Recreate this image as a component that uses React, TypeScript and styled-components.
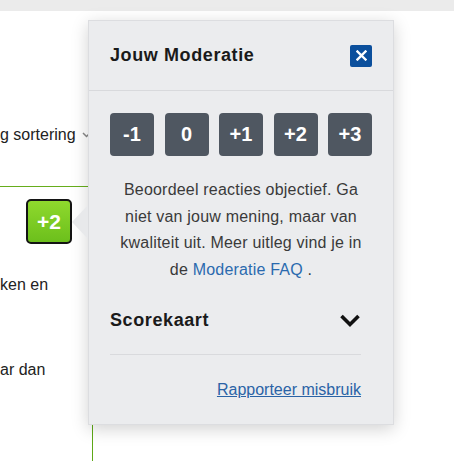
import styled, { createGlobalStyle } from "styled-components";

const GlobalStyle = createGlobalStyle`
  html, body {
    margin: 0;
    padding: 0;
    background: #ffffff;
  }

  body {
    font-family: "Liberation Sans", Arial, sans-serif;
  }
`;

const scores = ["-1", "0", "+1", "+2", "+3"];

export default function App() {
  return (
    <>
      <GlobalStyle />
      <SPage>
        {/* achtergrond: artikel en reacties */}
        <STopBar>
          <STopText>om</STopText>
        </STopBar>

        <SSortRow>
          g sortering
          <svg width="9" height="6" viewBox="0 0 9 6">
            <polyline points="1,1 4.5,4.5 8,1" fill="none" stroke="#888" strokeWidth="1.5" />
          </svg>
        </SSortRow>

        <SGreenRule />

        <SBadgeRow>
          <SBadge>+2</SBadge>
        </SBadgeRow>

        <SCommentLine $gap={30}>ken en</SCommentLine>
        <SCommentLine $gap={63}>ar dan</SCommentLine>

        <SThreadLine />

        {/* popover met moderatie */}
        <SPopover>
          <SHeader>
            <STitle>Jouw Moderatie</STitle>
            <SClose aria-label="Sluiten">
              <svg width="11" height="11" viewBox="0 0 11 11">
                <path d="M1.5 1.5 L9.5 9.5 M9.5 1.5 L1.5 9.5" stroke="#fff" strokeWidth="2.4" strokeLinecap="square" />
              </svg>
            </SClose>
          </SHeader>

          <SBody>
            <SScoreRow>
              {scores.map((s) => (
                <SScoreButton key={s}>{s}</SScoreButton>
              ))}
            </SScoreRow>

            <SHelp>
              Beoordeel reacties objectief. Ga
              <br />
              niet van jouw mening, maar van
              <br />
              kwaliteit uit. Meer uitleg vind je in
              <br />
              de <SLink href="#">Moderatie FAQ</SLink> .
            </SHelp>

            <SLower>
              <SScorecardRow>
                <SScorecardTitle>Scorekaart</SScorecardTitle>
                <svg width="22" height="15" viewBox="0 0 22 15">
                  <polyline points="2.5,3 11,11.5 19.5,3" fill="none" stroke="#111" strokeWidth="3.6" />
                </svg>
              </SScorecardRow>
              <SDivider />
              <SFooter>
                <SReport href="#">Rapporteer misbruik</SReport>
              </SFooter>
            </SLower>
          </SBody>
        </SPopover>
      </SPage>
    </>
  );
}

const SPage = styled.div`
  position: relative;
  width: 454px;
  height: 461px;
  overflow: hidden;
  color: #222222;
`;

const STopBar = styled.div`
  height: 11px;
  background: #ebebeb;
  overflow: hidden;
`;

const STopText = styled.div`
  font-size: 18px;
  line-height: 18px;
  margin-top: -15px;
  color: #222;
`;

const SSortRow = styled.div`
  display: flex;
  align-items: center;
  gap: 6px;
  height: 22px;
  margin-top: 113px;
  font-size: 16px;
  color: #222;
`;

const SGreenRule = styled.div`
  width: 300px;
  height: 1px;
  margin-top: 40px;
  background: #66ad1c;
`;

const SBadgeRow = styled.div`
  display: flex;
  padding-left: 26px;
  margin-top: 12px;
`;

const SBadge = styled.div`
  width: 46px;
  height: 45px;
  box-sizing: border-box;
  display: flex;
  align-items: center;
  justify-content: center;
  border: 2px solid #141414;
  border-radius: 5px;
  background: linear-gradient(#8fd92d, #6cbf1c);
  color: #ffffff;
  font-size: 21px;
  font-weight: bold;
`;

const SCommentLine = styled.div<{ $gap: number }>`
  margin-top: ${(p) => p.$gap}px;
  font-size: 16px;
  line-height: 22px;
  color: #222;
`;

const SThreadLine = styled.div`
  margin-left: 92px;
  margin-top: 10px;
  height: 90px;
  border-left: 1px solid #5ea817;
`;

const SPopover = styled.div`
  position: absolute;
  left: 88px;
  top: 20px;
  width: 306px;
  height: 405px;
  box-sizing: border-box;
  background: #ebecee;
  border: 1px solid #dcdde0;
  box-shadow: 0 4px 16px rgba(0, 0, 0, 0.18);

  &::before {
    content: "";
    position: absolute;
    left: -17px;
    top: 184px;
    border-top: 17px solid transparent;
    border-bottom: 17px solid transparent;
    border-right: 16px solid #e8e9eb;
  }
`;

const SHeader = styled.div`
  display: flex;
  align-items: center;
  justify-content: space-between;
  height: 70px;
  box-sizing: border-box;
  padding: 0 21px;
  border-bottom: 1px solid #d8d9dc;
`;

const STitle = styled.div`
  font-size: 18px;
  font-weight: bold;
  letter-spacing: 0.6px;
  color: #1a1a1a;
`;

const SClose = styled.button`
  width: 22px;
  height: 22px;
  padding: 0;
  display: flex;
  align-items: center;
  justify-content: center;
  border: none;
  border-radius: 2px;
  background: #0b4f9c;
  cursor: pointer;
`;

const SBody = styled.div`
  padding: 22px 21px 0;
`;

const SScoreRow = styled.div`
  display: flex;
  justify-content: space-between;
`;

const SScoreButton = styled.button`
  width: 44px;
  height: 43px;
  padding: 0;
  border: none;
  border-radius: 4px;
  background: #4f5761;
  color: #ffffff;
  font-family: "Liberation Sans", Arial, sans-serif;
  font-size: 20px;
  font-weight: bold;
  cursor: pointer;
`;

const SHelp = styled.p`
  margin: 21px 0 0;
  text-align: center;
  font-size: 16px;
  line-height: 26.5px;
  letter-spacing: 0.2px;
  color: #3a3a3a;
`;

const SLink = styled.a`
  color: #2a6aae;
  text-decoration: none;
`;

const SLower = styled.div`
  padding-right: 11px;
`;

const SScorecardRow = styled.div`
  display: flex;
  align-items: center;
  justify-content: space-between;
  height: 40px;
  margin-top: 17px;
  margin-bottom: 14px;
`;

const SScorecardTitle = styled.div`
  font-size: 18px;
  font-weight: bold;
  letter-spacing: 0.6px;
  color: #1a1a1a;
`;

const SDivider = styled.div`
  height: 1px;
  background: #d9dadd;
`;

const SFooter = styled.div`
  margin-top: 25px;
  text-align: right;
  line-height: 20px;
`;

const SReport = styled.a`
  font-size: 16px;
  color: #2a63a6;
  text-decoration: underline;
`;
